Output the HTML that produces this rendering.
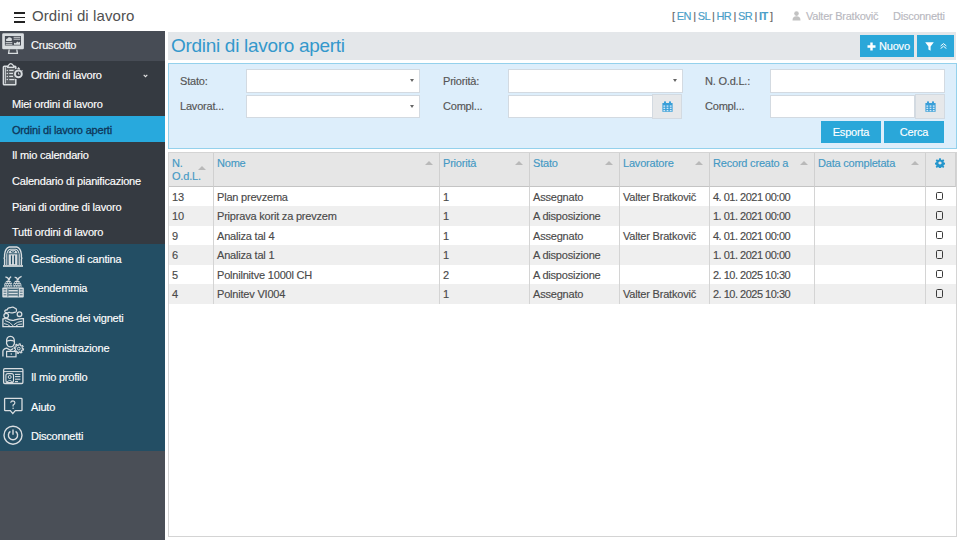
<!DOCTYPE html>
<html><head><meta charset="utf-8">
<style>
*{box-sizing:border-box;margin:0;padding:0}
html,body{width:960px;height:540px;overflow:hidden;background:#fff;font-family:"Liberation Sans",sans-serif;color:#444;letter-spacing:-0.2px;-webkit-text-stroke:0.15px}
#top{position:absolute;left:0;top:0;width:960px;height:31px;background:#fff}
.hb{position:absolute;left:14px;width:11px;height:1.6px;background:#222}
#apptitle{position:absolute;left:32px;top:7px;font-size:15px;color:#505050;white-space:nowrap;letter-spacing:0.1px;-webkit-text-stroke:0}
#langs{position:absolute;left:672px;top:9.5px;font-size:11px;color:#666;white-space:nowrap;letter-spacing:-0.7px;word-spacing:0.1px}
#langs b{font-weight:normal;color:#4a9ec8}
#langs b.on{font-weight:bold}
#user{position:absolute;left:806px;top:10px;font-size:11px;color:#b8b8c0;white-space:nowrap;letter-spacing:-0.25px}
#logout{position:absolute;left:893px;top:10px;font-size:11px;color:#b8b8c0;white-space:nowrap;letter-spacing:-0.25px}
#side{position:absolute;left:0;top:31px;width:165px;height:509px;background:#4a4f57}
.it{position:absolute;left:0;width:165px;color:#fff;font-size:11px;white-space:nowrap}
.it span{position:absolute;left:31px}
.ic{position:absolute}
#hdr{position:absolute;left:168px;top:32px;width:788px;height:27.5px;background:#e4e7ea}
#hdr h1{position:absolute;left:3px;top:3px;font-size:19px;font-weight:normal;color:#3398cc;white-space:nowrap;letter-spacing:-0.3px;-webkit-text-stroke:0}
.btn{position:absolute;background:#2aa7d9;color:#fff;font-size:11px;text-align:center;white-space:nowrap}
#filt{position:absolute;left:168px;top:63px;width:789px;height:86px;background:#ddeefb;border:1px solid #94d1ec}
.lbl{position:absolute;font-size:11px;color:#555;white-space:nowrap}
.inp{position:absolute;background:#fff;border:1px solid #d3dae1;height:23.5px}
.sel:after{content:"";position:absolute;right:5px;top:9px;border-left:2px solid transparent;border-right:2px solid transparent;border-top:3.5px solid #666}
.cal{position:absolute;background:#e6e8ea;border:1px solid #d3dae1;height:24.5px;width:30px}
#tbl{position:absolute;left:168px;top:152px;width:789px;height:385px;border:1px solid #d4d4d4;background:#fff}
.th{position:absolute;top:0;height:33.5px;background:#e6e6e6;border-right:1px solid #d0d0d0;border-bottom:1px solid #c4c4c4;font-size:11px;color:#4499c4}
.th span{position:absolute;left:3px;top:4px;line-height:13px}
.arr{position:absolute;width:0;height:0;border-left:4px solid transparent;border-right:4px solid transparent;border-bottom:4px solid #b9b9b9}
.row{position:absolute;left:0;width:787px;height:19.5px;font-size:11px;color:#4a4a4a}
.row.alt{background:#efefef}
.td{position:absolute;top:0;height:100%;border-right:1px solid #d4d4d4;white-space:nowrap}
.td span{position:absolute;left:3px;top:4.3px}
.dt{letter-spacing:-0.5px}
.cb{position:absolute;left:9.6px;top:5.3px;width:7px;height:8.6px;border:1px solid #3a3a3a;border-bottom-width:1.7px;border-radius:1.6px}
</style></head><body>
<div id="top">
  <div class="hb" style="top:12px"></div>
  <div class="hb" style="top:16.5px"></div>
  <div class="hb" style="top:21px"></div>
  <div id="apptitle">Ordini di lavoro</div>
  <div id="langs">[ <b>EN</b> | <b>SL</b> | <b>HR</b> | <b>SR</b> | <b class="on">IT</b> ]</div>
  <svg style="position:absolute;left:792px;top:11px" width="9" height="10" viewBox="0 0 9 10"><circle cx="4.5" cy="2.6" r="2.3" fill="#c2c2c2"/><path d="M0.5 9.5 Q0.5 5.3 4.5 5.3 Q8.5 5.3 8.5 9.5Z" fill="#c2c2c2"/></svg>
  <div id="user">Valter Bratkovič</div>
  <div id="logout">Disconnetti</div>
</div>
<div id="side">
<div class="it" style="top:0px;height:30px;background:#474c55;color:#fff"><span style="left:31px;top:7.70px">Cruscotto</span></div>
<svg class="ic" style="left:0px;top:0px" width="26" height="30" viewBox="0 0 26 30" fill="none" stroke="#d9dde0" stroke-width="1.3" ><path fill-rule="evenodd" stroke="none" fill="#d9dde0" d="M3.4 2.2 H22.7 Q23.9 2.2 23.9 3.4 V17.1 Q23.9 18.3 22.7 18.3 H3.4 Q2.2 18.3 2.2 17.1 V3.4 Q2.2 2.2 3.4 2.2Z M4.9 4.9 V14.6 H21 V4.9Z"/><path d="M9.2 18.5 L8.6 22.3 H17.4 L16.8 18.5" stroke-width="1.3"/><path d="M6 9.6 Q5.6 7.6 7.5 7.5 Q8.3 5.6 10.3 6.4 Q12.2 6.8 11.9 8.6 Q12.3 9.9 11 9.9 H6.6Z" fill="#d9dde0" stroke="none"/><line x1="5.6" y1="11.6" x2="12.3" y2="11.6" stroke-width="0.9"/><line x1="5.6" y1="13.3" x2="12.3" y2="13.3" stroke-width="0.9"/><line x1="13.6" y1="6.3" x2="20.2" y2="6.3" stroke-width="0.9"/><line x1="13.6" y1="8.2" x2="20.2" y2="8.2" stroke-width="0.9"/><path d="M14 13.8 V11.8 L15.8 12.3 L17.3 10.6 L18.6 11.6 L20 10.8 V13.8Z" fill="#d9dde0" stroke="none"/></svg>
<div class="it" style="top:30px;height:30px;background:#353a41;color:#fff"><span style="left:31px;top:7.70px">Ordini di lavoro</span><svg class="ic" style="left:142.5px;top:12.5px" width="5" height="4" viewBox="0 0 5 4"><path d="M0.7 0.9 L2.5 2.7 L4.3 0.9" stroke="#e8e8e8" stroke-width="1.1" fill="none"/></svg></div>
<svg class="ic" style="left:0px;top:30px" width="26" height="30" viewBox="0 0 26 30" fill="none" stroke="#d9dde0" stroke-width="1.3" ><path d="M4.2 5.2 H15 Q15.8 5.2 15.8 6 V22.9 Q15.8 23.7 15 23.7 H4.2 Q3.4 23.7 3.4 22.9 V6 Q3.4 5.2 4.2 5.2Z" fill="#d9dde0" fill-opacity="0.22" stroke="none"/><path d="M8.2 5.2 H4.2 Q3.4 5.2 3.4 6 V22.9 Q3.4 23.7 4.2 23.7 H15 Q15.8 23.7 15.8 22.9 V18" stroke-width="1.5"/><path d="M13.3 5.2 H15 Q15.8 5.2 15.8 6 V8" stroke-width="1.5"/><path d="M7.6 6.4 L8.4 4.4 Q9.6 2.6 10.8 2.6 Q12 2.6 13.2 4.4 L14 6.4Z" stroke-width="1.2"/><line x1="5.5" y1="6.2" x2="5.5" y2="22.5" stroke-width="0.8"/><circle cx="7.3" cy="9.4" r="0.75" fill="#d9dde0" stroke="none"/><circle cx="7.3" cy="12.4" r="0.75" fill="#d9dde0" stroke="none"/><circle cx="7.3" cy="15.4" r="0.75" fill="#d9dde0" stroke="none"/><circle cx="7.3" cy="18.6" r="0.75" fill="#d9dde0" stroke="none"/><line x1="9.2" y1="9.4" x2="13.6" y2="9.4" stroke-width="1.2"/><line x1="9.2" y1="12.4" x2="13" y2="12.4" stroke-width="1.2"/><line x1="9.2" y1="15.4" x2="13" y2="15.4" stroke-width="1.2"/><line x1="9.2" y1="18.6" x2="14.5" y2="18.6" stroke-width="1.2"/><circle cx="18.4" cy="12.9" r="3.4" stroke-width="1.9"/><path d="M17.6 8.2 L18.6 7 L19.8 8.4" stroke-width="1.2"/><path d="M21.6 10 L22.6 9.6" stroke-width="1.2"/><path d="M18.4 11.4 V13.2 H19.6" stroke-width="0.9"/></svg>
<div class="it" style="top:60px;height:25px;background:#353a41;color:#fff"><span style="left:12px;top:6.50px">Miei ordini di lavoro</span></div>
<div class="it" style="top:85px;height:26px;background:#28a9dd;color:#0e3659;-webkit-text-stroke:0.3px"><span style="left:12px;top:7.50px">Ordini di lavoro aperti</span></div>
<div class="it" style="top:111px;height:26px;background:#353a41;color:#fff"><span style="left:12px;top:7.00px">Il mio calendario</span></div>
<div class="it" style="top:137px;height:26px;background:#353a41;color:#fff"><span style="left:12px;top:7.00px">Calendario di pianificazione</span></div>
<div class="it" style="top:163px;height:25px;background:#353a41;color:#fff"><span style="left:12px;top:6.50px">Piani di ordine di lavoro</span></div>
<div class="it" style="top:188px;height:25px;background:#353a41;color:#fff"><span style="left:12px;top:7.10px">Tutti ordini di lavoro</span></div>
<div class="it" style="top:213px;height:29.57px;background:#234e64;color:#fff"><span style="left:31px;top:8.88px">Gestione di cantina</span></div>
<svg class="ic" style="left:0px;top:213px" width="26" height="30" viewBox="0 0 26 30" fill="none" stroke="#d9dde0" stroke-width="1.3" ><path d="M4.6 21.3 V15 Q3.8 14.2 4.6 13.3 V10.5 Q5.2 4.2 9.3 3 H16.7 Q20.8 4.2 21.4 10.5 V13.3 Q22.2 14.2 21.4 15 V21.3" stroke-width="1.4"/><line x1="3" y1="22" x2="23" y2="22" stroke-width="1.7"/><path d="M6.8 21 V10.8 Q7.4 5.6 10.4 5.2 H15.6 Q18.6 5.6 19.2 10.8 V21" stroke-width="1.1"/><path d="M8.6 9.6 Q9.5 6.8 11 6.6 H15 Q16.5 6.8 17.4 9.6Z" fill="#d9dde0" stroke-width="0.8"/><rect x="8.6" y="9.6" width="8.8" height="11.6" fill="#d9dde0" stroke="none"/><line x1="11.5" y1="11.4" x2="11.5" y2="20.2" stroke="#234e64" stroke-width="1.2"/><line x1="14.5" y1="11.4" x2="14.5" y2="20.2" stroke="#234e64" stroke-width="1.2"/><line x1="7.4" y1="9.8" x2="18.6" y2="9.8" stroke="#234e64" stroke-width="0.9"/><path d="M11.2 7 L12.2 8.8 M14.8 7 L13.8 8.8 M13 6.8 V9" stroke="#234e64" stroke-width="0.9"/></svg>
<div class="it" style="top:242.57px;height:29.57px;background:#234e64;color:#fff"><span style="left:31px;top:8.88px">Vendemmia</span></div>
<svg class="ic" style="left:0px;top:243px" width="26" height="30" viewBox="0 0 26 30" fill="none" stroke="#d9dde0" stroke-width="1.3" ><rect x="2.3" y="13.4" width="21.5" height="10" rx="1" fill="#d9dde0" stroke="none"/><line x1="7.9" y1="14.4" x2="7.9" y2="22.6" stroke="#234e64" stroke-width="0.9"/><line x1="18.3" y1="14.4" x2="18.3" y2="22.6" stroke="#234e64" stroke-width="0.9"/><line x1="8.4" y1="15.3" x2="17.8" y2="15.3" stroke="#234e64" stroke-width="1.1"/><line x1="8.4" y1="18.1" x2="17.8" y2="18.1" stroke="#234e64" stroke-width="1.1"/><line x1="8.4" y1="20.9" x2="17.8" y2="20.9" stroke="#234e64" stroke-width="1.1"/><path d="M3.6 15.8 H6.4 M3.6 18.2 H6.4 M3.6 20.8 H6.4 M19.8 15.8 H22.6 M19.8 18.2 H22.6 M19.8 20.8 H22.6" stroke="#234e64" stroke-width="0.8"/><path d="M3.9 13.2 Q3.9 7.2 8.4 6.3 Q12.8 7.2 12.8 13.2Z" fill="#d9dde0" stroke="none"/><path d="M12.6 13.2 Q12.6 7.2 17.2 6.3 Q21.7 7.2 21.7 13.2Z" fill="#d9dde0" stroke="none"/><g stroke="none" fill="#234e64"><circle cx="5.00" cy="8.6" r="0.65"/><circle cx="6.75" cy="8.6" r="0.65"/><circle cx="8.50" cy="8.6" r="0.65"/><circle cx="10.25" cy="8.6" r="0.65"/><circle cx="12.00" cy="8.6" r="0.65"/><circle cx="13.75" cy="8.6" r="0.65"/><circle cx="15.50" cy="8.6" r="0.65"/><circle cx="17.25" cy="8.6" r="0.65"/><circle cx="19.00" cy="8.6" r="0.65"/><circle cx="20.75" cy="8.6" r="0.65"/><circle cx="5.85" cy="10.4" r="0.65"/><circle cx="7.60" cy="10.4" r="0.65"/><circle cx="9.35" cy="10.4" r="0.65"/><circle cx="11.10" cy="10.4" r="0.65"/><circle cx="12.85" cy="10.4" r="0.65"/><circle cx="14.60" cy="10.4" r="0.65"/><circle cx="16.35" cy="10.4" r="0.65"/><circle cx="18.10" cy="10.4" r="0.65"/><circle cx="19.85" cy="10.4" r="0.65"/><circle cx="5.00" cy="12.2" r="0.65"/><circle cx="6.75" cy="12.2" r="0.65"/><circle cx="8.50" cy="12.2" r="0.65"/><circle cx="10.25" cy="12.2" r="0.65"/><circle cx="12.00" cy="12.2" r="0.65"/><circle cx="13.75" cy="12.2" r="0.65"/><circle cx="15.50" cy="12.2" r="0.65"/><circle cx="17.25" cy="12.2" r="0.65"/><circle cx="19.00" cy="12.2" r="0.65"/><circle cx="20.75" cy="12.2" r="0.65"/></g><path d="M12.7 7.4 V13.2" stroke="#234e64" stroke-width="0.6"/><path d="M5.4 3.2 Q8 2.8 9 6.2 M11.2 2.6 Q9.4 3.4 9 6.2 M14.6 3.4 Q17 3 17.6 6.2 M21.6 2.4 Q18.6 3.2 17.6 6.2" stroke-width="1.4"/></svg>
<div class="it" style="top:272.14px;height:29.57px;background:#234e64;color:#fff"><span style="left:31px;top:8.88px">Gestione dei vigneti</span></div>
<svg class="ic" style="left:0px;top:272px" width="26" height="30" viewBox="0 0 26 30" fill="none" stroke="#d9dde0" stroke-width="1.3" ><path d="M6.3 9.6 Q4.6 9.6 4.8 8 Q5.2 6.6 6.9 7.1 Q7.8 4.2 10.8 4.6 Q12.8 3.2 14.8 5.2 Q16.8 5.6 16.5 7.7 Q16.2 9.7 14.2 9.4 Q11.3 10.6 9.1 9.3 Q7.6 10 6.3 9.6Z" stroke-width="1.2"/><circle cx="6.2" cy="12.6" r="2.3" stroke-width="1.3"/><circle cx="19.5" cy="11.2" r="2.3" stroke-width="1.3"/><path d="M2.9 16 V23.6 H23.4 V15.6 Q19 15.2 14.2 17.2 Q10.4 18 6.8 15.4 Q4.6 15.6 2.9 16Z" stroke-width="1.3"/><path d="M5 17.6 Q10.5 18.8 13.6 23.4 M4 20.6 Q8 21 10.2 23.4 M13.8 21.8 Q17 18.6 22.2 18.2 M16 23 Q18.2 20.8 22.2 21" stroke-width="1"/></svg>
<div class="it" style="top:301.71px;height:29.58px;background:#234e64;color:#fff"><span style="left:31px;top:8.89px">Amministrazione</span></div>
<svg class="ic" style="left:0px;top:302px" width="26" height="30" viewBox="0 0 26 30" fill="none" stroke="#d9dde0" stroke-width="1.3" ><path d="M6.6 9 Q6.2 3.4 10.4 3.4 Q14.6 3.4 14.4 9 V10.6 Q13.6 13.8 10.5 13.8 Q7.4 13.8 6.6 10.6Z" stroke-width="1.3"/><path d="M6.6 8.2 Q10.5 6.6 14.4 8.2" stroke-width="1.1"/><path d="M2.9 23.6 V18.6 Q3 16 6.8 15.2 L10.5 17.2 L13 15.6" stroke-width="1.3"/><rect x="6.6" y="18.4" width="9.4" height="5.4" stroke-width="1.2"/><circle cx="11.3" cy="21" r="0.8" fill="#d9dde0" stroke="none"/><path d="M22.30 15.60 L23.59 15.90 L23.30 17.26 L22.00 17.02 L21.27 18.07 L21.97 19.20 L20.81 19.96 L20.06 18.86 L18.80 19.10 L18.50 20.39 L17.14 20.10 L17.38 18.80 L16.33 18.07 L15.20 18.77 L14.44 17.61 L15.54 16.86 L15.30 15.60 L14.01 15.30 L14.30 13.94 L15.60 14.18 L16.33 13.13 L15.63 12.00 L16.79 11.24 L17.54 12.34 L18.80 12.10 L19.10 10.81 L20.46 11.10 L20.22 12.40 L21.27 13.13 L22.40 12.43 L23.16 13.59 L22.06 14.34Z" stroke-width="1.1" stroke-linejoin="round"/><circle cx="18.8" cy="15.6" r="1.4" stroke-width="1"/></svg>
<div class="it" style="top:331.29px;height:29.57px;background:#234e64;color:#fff"><span style="left:31px;top:8.88px">Il mio profilo</span></div>
<svg class="ic" style="left:0px;top:332px" width="26" height="30" viewBox="0 0 26 30" fill="none" stroke="#d9dde0" stroke-width="1.3" ><rect x="3.6" y="5.7" width="19.3" height="14.8" rx="1.2" stroke-width="1.3"/><line x1="3.6" y1="8.6" x2="22.9" y2="8.6" stroke-width="1"/><rect x="5.9" y="10.6" width="7.6" height="9" rx="2" stroke-width="1.1"/><circle cx="9.7" cy="14" r="1.5" stroke-width="1"/><path d="M6.8 19.4 Q9.7 15.6 12.6 19.4" stroke-width="1"/><line x1="15" y1="11.4" x2="20.4" y2="11.4" stroke-width="1.1"/><line x1="15" y1="13.6" x2="20.4" y2="13.6" stroke-width="1.1"/><line x1="15" y1="16.2" x2="20.4" y2="16.2" stroke-width="1.1"/><line x1="15" y1="18.6" x2="18" y2="18.6" stroke-width="1.1"/></svg>
<div class="it" style="top:360.86px;height:29.57px;background:#234e64;color:#fff"><span style="left:31px;top:8.88px">Aiuto</span></div>
<svg class="ic" style="left:0px;top:361px" width="26" height="30" viewBox="0 0 26 30" fill="none" stroke="#d9dde0" stroke-width="1.3" ><path d="M5.3 6.4 H21.3 Q22 6.4 22 7.1 V18 Q22 18.7 21.3 18.7 H15.3 L12.8 21.6 L10.3 18.7 H5.3 Q4.6 18.7 4.6 18 V7.1 Q4.6 6.4 5.3 6.4Z" stroke-width="1.3"/><path d="M10.7 10.8 Q10.9 8.9 12.9 8.9 Q14.9 9 14.9 10.8 Q14.9 12.1 13.1 13.1 V14.6" stroke-width="1.2"/><circle cx="13.1" cy="16.2" r="0.75" fill="#d9dde0" stroke="none"/></svg>
<div class="it" style="top:390.43px;height:29.57px;background:#234e64;color:#fff"><span style="left:31px;top:8.88px">Disconnetti</span></div>
<svg class="ic" style="left:0px;top:391px" width="26" height="30" viewBox="0 0 26 30" fill="none" stroke="#d9dde0" stroke-width="1.3" ><circle cx="13" cy="13.2" r="9" stroke-width="1.4"/><path d="M10.4 9.4 A4.6 4.6 0 1 0 15.6 9.4" stroke-width="1.4"/><line x1="13" y1="7.6" x2="13" y2="12.8" stroke-width="1.4"/></svg>
</div>
<div id="hdr"><h1>Ordini di lavoro aperti</h1></div>
<div class="btn" style="left:860px;top:35px;width:54px;height:22px;line-height:22px"><svg style="position:absolute;left:7px;top:6.5px" width="9" height="9" viewBox="0 0 9 9"><path d="M4.5 0.5 V8.5 M0.5 4.5 H8.5" stroke="#fff" stroke-width="2.4"/></svg><span style="position:absolute;left:19px;top:0">Nuovo</span></div>
<div class="btn" style="left:917px;top:35px;width:37px;height:22px"><svg style="position:absolute;left:8px;top:7px" width="9" height="9" viewBox="0 0 9 9"><path d="M0.2 0.3 H8.8 L5.6 4.4 V8.8 L3.4 7.4 V4.4Z" fill="#fff"/></svg><svg style="position:absolute;left:22.5px;top:8.3px" width="7" height="6" viewBox="0 0 7 6"><path d="M0.6 3 L3.5 0.6 L6.4 3 M0.6 5.6 L3.5 3.2 L6.4 5.6" stroke="#fff" stroke-width="1" fill="none"/></svg></div>
<div id="filt"></div>
<div class="lbl" style="left:180px;top:75px">Stato:</div>
<div class="lbl" style="left:180px;top:100.4px">Lavorat...</div>
<div class="inp sel" style="left:246px;top:69px;width:174px"></div>
<div class="inp sel" style="left:246px;top:94.5px;width:174px"></div>
<div class="lbl" style="left:443px;top:75px">Priorità:</div>
<div class="lbl" style="left:443px;top:100.4px">Compl...</div>
<div class="inp sel" style="left:508px;top:69px;width:175px"></div>
<div class="inp" style="left:508px;top:94.5px;width:145px"></div>
<div class="cal" style="left:652px;top:94px"><svg style="position:absolute;left:9px;top:6px" width="11" height="11" viewBox="0 0 11 11"><path fill="#3a9fd8" d="M0.4 2 H10.6 V10.8 H0.4Z"/><rect x="2" y="0.3" width="2" height="3" rx="0.8" fill="#3a9fd8"/><rect x="7" y="0.3" width="2" height="3" rx="0.8" fill="#3a9fd8"/><g fill="#cfe8f8"><rect x="1.4" y="4.4" width="1.8" height="1.4"/><rect x="4.6" y="4.4" width="1.8" height="1.4"/><rect x="7.8" y="4.4" width="1.8" height="1.4"/><rect x="1.4" y="6.7" width="1.8" height="1.4"/><rect x="4.6" y="6.7" width="1.8" height="1.4"/><rect x="7.8" y="6.7" width="1.8" height="1.4"/><rect x="1.4" y="9" width="1.8" height="1.2"/><rect x="4.6" y="9" width="1.8" height="1.2"/><rect x="7.8" y="9" width="1.8" height="1.2"/></g></svg></div>
<div class="lbl" style="left:705px;top:75px">N. O.d.L.:</div>
<div class="lbl" style="left:705px;top:100.4px">Compl...</div>
<div class="inp" style="left:770px;top:69px;width:175px"></div>
<div class="inp" style="left:770px;top:94.5px;width:145px"></div>
<div class="cal" style="left:914.5px;top:94px"><svg style="position:absolute;left:9px;top:6px" width="11" height="11" viewBox="0 0 11 11"><path fill="#3a9fd8" d="M0.4 2 H10.6 V10.8 H0.4Z"/><rect x="2" y="0.3" width="2" height="3" rx="0.8" fill="#3a9fd8"/><rect x="7" y="0.3" width="2" height="3" rx="0.8" fill="#3a9fd8"/><g fill="#cfe8f8"><rect x="1.4" y="4.4" width="1.8" height="1.4"/><rect x="4.6" y="4.4" width="1.8" height="1.4"/><rect x="7.8" y="4.4" width="1.8" height="1.4"/><rect x="1.4" y="6.7" width="1.8" height="1.4"/><rect x="4.6" y="6.7" width="1.8" height="1.4"/><rect x="7.8" y="6.7" width="1.8" height="1.4"/><rect x="1.4" y="9" width="1.8" height="1.2"/><rect x="4.6" y="9" width="1.8" height="1.2"/><rect x="7.8" y="9" width="1.8" height="1.2"/></g></svg></div>
<div class="btn" style="left:821px;top:121px;width:60px;height:22px;line-height:22px">Esporta</div>
<div class="btn" style="left:884px;top:121px;width:60px;height:22px;line-height:22px">Cerca</div>
<div id="tbl">
<div class="th" style="left:0px;width:45px"><span>N.<br>O.d.L.</span><i class="arr" style="left:29px;top:13px;border-left-width:4.5px;border-right-width:4.5px;border-bottom-width:4.5px"></i></div>
<div class="th" style="left:45px;width:226px"><span>Nome</span><i class="arr" style="left:211px;top:7.5px"></i></div>
<div class="th" style="left:271px;width:90px"><span>Priorità</span><i class="arr" style="left:75px;top:7.5px"></i></div>
<div class="th" style="left:361px;width:90px"><span>Stato</span><i class="arr" style="left:75px;top:7.5px"></i></div>
<div class="th" style="left:451px;width:90px"><span>Lavoratore</span><i class="arr" style="left:75px;top:7.5px"></i></div>
<div class="th" style="left:541px;width:105px"><span>Record creato a</span><i class="arr" style="left:90px;top:7.5px"></i></div>
<div class="th" style="left:646px;width:111px"><span>Data completata</span><i class="arr" style="left:96px;top:7.5px"></i></div>
<div class="th" style="left:757px;width:30px"><svg style="position:absolute;left:8.7px;top:4.7px" width="10" height="10" viewBox="0 0 10 10"><path fill="#2596cc" d="M4.2 0.3h1.6l0.3 1.4 0.9 0.4 1.2-0.8 1.1 1.1-0.8 1.2 0.4 0.9 1.4 0.3v1.6l-1.4 0.3-0.4 0.9 0.8 1.2-1.1 1.1-1.2-0.8-0.9 0.4-0.3 1.4h-1.6l-0.3-1.4-0.9-0.4-1.2 0.8-1.1-1.1 0.8-1.2-0.4-0.9-1.4-0.3v-1.6l1.4-0.3 0.4-0.9-0.8-1.2 1.1-1.1 1.2 0.8 0.9-0.4z M5 3.4a1.6 1.6 0 1 0 0.01 0z"/></svg></div>
<div class="row" style="top:33.5px"><div class="td" style="left:0px;width:45px"><span>13</span></div><div class="td" style="left:45px;width:226px"><span>Plan prevzema</span></div><div class="td" style="left:271px;width:90px"><span>1</span></div><div class="td" style="left:361px;width:90px"><span>Assegnato</span></div><div class="td" style="left:451px;width:90px"><span>Valter Bratkovič</span></div><div class="td" style="left:541px;width:105px"><span class="dt">4. 01. 2021 00:00</span></div><div class="td" style="left:646px;width:111px"><span></span></div><div class="td" style="left:757px;width:30px;border-right:none"><i class="cb"></i></div></div>
<div class="row alt" style="top:53.0px"><div class="td" style="left:0px;width:45px"><span>10</span></div><div class="td" style="left:45px;width:226px"><span>Priprava korit za prevzem</span></div><div class="td" style="left:271px;width:90px"><span>1</span></div><div class="td" style="left:361px;width:90px"><span>A disposizione</span></div><div class="td" style="left:451px;width:90px"><span></span></div><div class="td" style="left:541px;width:105px"><span class="dt">1. 01. 2021 00:00</span></div><div class="td" style="left:646px;width:111px"><span></span></div><div class="td" style="left:757px;width:30px;border-right:none"><i class="cb"></i></div></div>
<div class="row" style="top:72.5px"><div class="td" style="left:0px;width:45px"><span>9</span></div><div class="td" style="left:45px;width:226px"><span>Analiza tal 4</span></div><div class="td" style="left:271px;width:90px"><span>1</span></div><div class="td" style="left:361px;width:90px"><span>Assegnato</span></div><div class="td" style="left:451px;width:90px"><span>Valter Bratkovič</span></div><div class="td" style="left:541px;width:105px"><span class="dt">4. 01. 2021 00:00</span></div><div class="td" style="left:646px;width:111px"><span></span></div><div class="td" style="left:757px;width:30px;border-right:none"><i class="cb"></i></div></div>
<div class="row alt" style="top:92.0px"><div class="td" style="left:0px;width:45px"><span>6</span></div><div class="td" style="left:45px;width:226px"><span>Analiza tal 1</span></div><div class="td" style="left:271px;width:90px"><span>1</span></div><div class="td" style="left:361px;width:90px"><span>A disposizione</span></div><div class="td" style="left:451px;width:90px"><span></span></div><div class="td" style="left:541px;width:105px"><span class="dt">1. 01. 2021 00:00</span></div><div class="td" style="left:646px;width:111px"><span></span></div><div class="td" style="left:757px;width:30px;border-right:none"><i class="cb"></i></div></div>
<div class="row" style="top:111.5px"><div class="td" style="left:0px;width:45px"><span>5</span></div><div class="td" style="left:45px;width:226px"><span>Polnilnitve 1000l CH</span></div><div class="td" style="left:271px;width:90px"><span>2</span></div><div class="td" style="left:361px;width:90px"><span>A disposizione</span></div><div class="td" style="left:451px;width:90px"><span></span></div><div class="td" style="left:541px;width:105px"><span class="dt">2. 10. 2025 10:30</span></div><div class="td" style="left:646px;width:111px"><span></span></div><div class="td" style="left:757px;width:30px;border-right:none"><i class="cb"></i></div></div>
<div class="row alt" style="top:131.0px"><div class="td" style="left:0px;width:45px"><span>4</span></div><div class="td" style="left:45px;width:226px"><span>Polnitev VI004</span></div><div class="td" style="left:271px;width:90px"><span>1</span></div><div class="td" style="left:361px;width:90px"><span>Assegnato</span></div><div class="td" style="left:451px;width:90px"><span>Valter Bratkovič</span></div><div class="td" style="left:541px;width:105px"><span class="dt">2. 10. 2025 10:30</span></div><div class="td" style="left:646px;width:111px"><span></span></div><div class="td" style="left:757px;width:30px;border-right:none"><i class="cb"></i></div></div>
</div>
</body></html>
